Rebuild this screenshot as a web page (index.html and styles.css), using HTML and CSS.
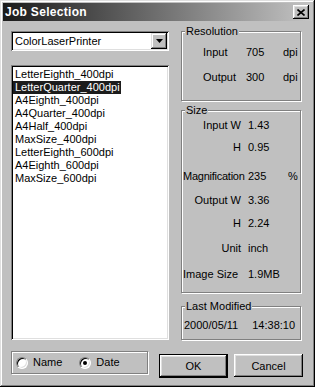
FILE: index.html
```html
<!DOCTYPE html>
<html lang="en">
<head>
    <meta charset="UTF-8">
    <title>Job Selection</title>
    <link rel="stylesheet" href="styles.css">
</head>
<body>
    <div class="dialog">
        <div class="titlebar">
            <span class="title">Job Selection</span>
            <button class="close" aria-label="Close">
                <svg width="8" height="7" viewBox="0 0 8 7"><path d="M0.5 0.5L7.5 6.5M7.5 0.5L0.5 6.5" stroke="#000" stroke-width="1.6" fill="none"/></svg>
            </button>
        </div>

        <div class="main">
            <div class="left">
                <div class="combo">
                    <span class="combo-text">ColorLaserPrinter</span>
                    <span class="drop">
                        <svg width="7" height="4" viewBox="0 0 7 4"><path d="M0 0H7L3.5 4Z" fill="#000"/></svg>
                    </span>
                </div>
                <ul class="listbox">
                    <li><span>LetterEighth_400dpi</span></li>
                    <li class="selected"><span>LetterQuarter_400dpi</span></li>
                    <li><span>A4Eighth_400dpi</span></li>
                    <li><span>A4Quarter_400dpi</span></li>
                    <li><span>A4Half_400dpi</span></li>
                    <li><span>MaxSize_400dpi</span></li>
                    <li><span>LetterEighth_600dpi</span></li>
                    <li><span>A4Eighth_600dpi</span></li>
                    <li><span>MaxSize_600dpi</span></li>
                </ul>
            </div>

            <div class="right">
                <fieldset class="group resolution">
                    <legend>Resolution</legend>
                    <div class="res-grid">
                        <span>Input</span><span>705</span><span>dpi</span>
                        <span>Output</span><span>300</span><span>dpi</span>
                    </div>
                </fieldset>

                <fieldset class="group size">
                    <legend>Size</legend>
                    <div class="size-grid">
                        <span class="lbl">Input W</span><span>1.43</span><span></span>
                        <span class="lbl">H</span><span>0.95</span><span></span>
                        <span class="lbl tight">Magnification</span><span>235</span><span>%</span>
                        <span class="lbl">Output W</span><span>3.36</span><span></span>
                        <span class="lbl">H</span><span>2.24</span><span></span>
                        <span class="lbl">Unit</span><span>inch</span><span></span>
                        <span class="lbl left-lbl">Image Size</span><span>1.9MB</span><span></span>
                    </div>
                </fieldset>

                <fieldset class="group modified">
                    <legend>Last Modified</legend>
                    <div class="stamp">
                        <span>2000/05/11</span><span class="time">14:38:10</span>
                    </div>
                </fieldset>
            </div>
        </div>

        <div class="bottom">
            <div class="sort">
                <label class="option"><span class="radio"></span>Name</label>
                <label class="option"><span class="radio checked"></span>Date</label>
            </div>
            <button class="btn default">OK</button>
            <button class="btn cancel">Cancel</button>
        </div>
    </div>
</body>
</html>
```

FILE: styles.css
```css
* {
    box-sizing: border-box;
}

body {
    margin: 0;
    background: #c0c0c0;
    font-family: "Liberation Sans", Arial, sans-serif;
    font-size: 11px;
    line-height: 13px;
    color: #000;
}

.dialog {
    width: 315px;
    height: 387px;
    padding: 3px;
    background: #c0c0c0;
    box-shadow: inset -1px -1px 0 #000, inset 1px 1px 0 #dfdfdf,
                inset -2px -2px 0 #808080, inset 2px 2px 0 #fff;
}

.titlebar {
    height: 18px;
    display: flex;
    align-items: center;
    justify-content: space-between;
    padding: 0 3px 0 2px;
    background: linear-gradient(to right, #1a1a1a, #c4c4c4);
}

.title {
    color: #fff;
    font-weight: bold;
    font-size: 12px;
    letter-spacing: 0.3px;
}

.close {
    width: 16px;
    height: 14px;
    padding: 0;
    border: 0;
    background: #c0c0c0;
    display: flex;
    align-items: center;
    justify-content: center;
    box-shadow: inset -1px -1px 0 #000, inset 1px 1px 0 #fff,
                inset -2px -2px 0 #808080, inset 2px 2px 0 #dfdfdf;
}

.main {
    display: flex;
    gap: 12px;
    padding: 4px 0 0 8px;
}

.left {
    width: 158px;
    padding-top: 6px;
}

.combo {
    height: 20px;
    display: flex;
    align-items: center;
    padding: 2px;
    background: #fff;
    box-shadow: inset 1px 1px 0 #808080, inset -1px -1px 0 #fff,
                inset 2px 2px 0 #000, inset -2px -2px 0 #dfdfdf;
}

.combo-text {
    flex: 1;
    padding-left: 2px;
}

.drop {
    width: 16px;
    height: 16px;
    display: flex;
    align-items: center;
    justify-content: center;
    background: #c0c0c0;
    box-shadow: inset -1px -1px 0 #000, inset 1px 1px 0 #dfdfdf,
                inset -2px -2px 0 #808080, inset 2px 2px 0 #fff;
}

.listbox {
    list-style: none;
    margin: 14px 0 0;
    height: 275px;
    padding: 3px 2px 0;
    background: #fff;
    box-shadow: inset 1px 1px 0 #808080, inset -1px -1px 0 #fff,
                inset 2px 2px 0 #000, inset -2px -2px 0 #dfdfdf;
}

.listbox li {
    height: 13px;
}

.listbox span {
    display: inline-block;
    padding: 0 1px 0 2px;
}

.listbox .selected span {
    background: #1c1c1c;
    color: #fff;
}

.right {
    width: 120px;
}

.group {
    margin: 0;
    padding: 0;
    border: 1px solid #808080;
    box-shadow: inset 1px 1px 0 #fff, 1px 1px 0 #fff;
}

.group legend {
    margin-left: 3px;
    padding: 0 1px;
    background: #c0c0c0;
}

.resolution {
    height: 76px;
}

.res-grid {
    display: grid;
    grid-template-columns: 43px 37px auto;
    row-gap: 12px;
    padding: 8px 0 0 21px;
}

.size {
    height: 189px;
    margin-top: 3px;
}

.size-grid {
    display: grid;
    grid-template-columns: 65px 40px auto;
    grid-template-rows: 22px 29px 24px 23px 25px 26px 13px;
    padding: 2px 0 0 1px;
}

.size-grid .lbl {
    text-align: right;
    padding-right: 7px;
}

.size-grid .tight {
    letter-spacing: -0.25px;
}

.size-grid .left-lbl {
    text-align: left;
}

.modified {
    height: 40px;
    margin-top: 7px;
}

.stamp {
    padding: 6px 0 0 2px;
}

.stamp .time {
    margin-left: 14px;
}

.bottom {
    display: flex;
    align-items: flex-start;
    padding-left: 8px;
}

.sort {
    width: 137px;
    height: 23px;
    margin-top: 11px;
    display: flex;
    align-items: center;
    padding-left: 4px;
    border: 1px solid #808080;
    box-shadow: inset 1px 1px 0 #fff, 1px 1px 0 #fff;
}

.option {
    display: flex;
    align-items: center;
    gap: 5px;
    margin-right: 17px;
}

.radio {
    position: relative;
    width: 12px;
    height: 12px;
    border-radius: 50%;
    background: #fff;
    border: 1px solid;
    border-color: #808080 #fff #fff #808080;
    box-shadow: inset 1px 1px 0 #000, inset -1px -1px 0 #dfdfdf;
}

.radio.checked::after {
    content: "";
    position: absolute;
    left: 3px;
    top: 3px;
    width: 4px;
    height: 4px;
    border-radius: 50%;
    background: #000;
}

.btn {
    width: 69px;
    height: 23px;
    margin-top: 14px;
    padding: 0;
    border: 0;
    background: #c0c0c0;
    font-family: "Liberation Sans", Arial, sans-serif;
    font-size: 11px;
    color: #000;
    box-shadow: inset -1px -1px 0 #000, inset 1px 1px 0 #fff,
                inset -2px -2px 0 #808080, inset 2px 2px 0 #dfdfdf;
}

.btn.default {
    margin-left: 11px;
    height: 24px;
    border: 1px solid #000;
}

.btn.cancel {
    margin-left: 6px;
}
```
